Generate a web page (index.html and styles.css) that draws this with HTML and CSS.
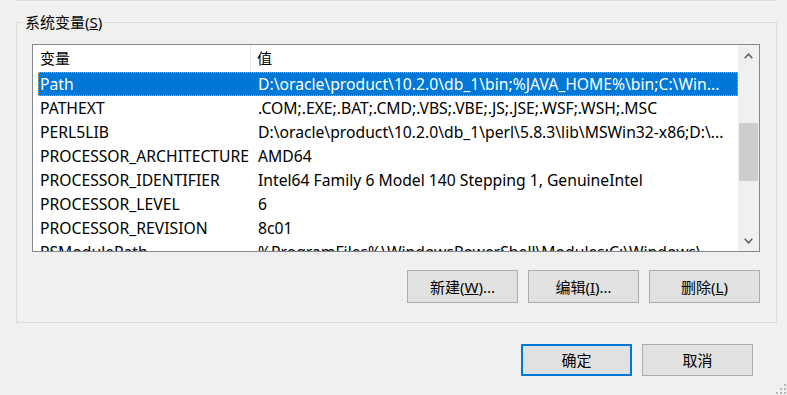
FILE: index.html
```html
<!DOCTYPE html>
<html>
<head>
  <meta charset="utf-8">
  <link rel="stylesheet" href="styles.css">
</head>
<body>
  <div class="prev-group"></div>

  <fieldset class="group">
    <legend class="group-title">系统变量(<u>S</u>)</legend>

    <div class="listview">
      <div class="list-body">
        <div class="list-header">
          <div class="col-name">变量</div>
          <div class="col-value">值</div>
        </div>
        <div class="row selected">
          <div class="col-name">Path</div>
          <div class="col-value">D:\oracle\product\10.2.0\db_1\bin;%JAVA_HOME%\bin;C:\Win...</div>
        </div>
        <div class="row">
          <div class="col-name">PATHEXT</div>
          <div class="col-value">.COM;.EXE;.BAT;.CMD;.VBS;.VBE;.JS;.JSE;.WSF;.WSH;.MSC</div>
        </div>
        <div class="row">
          <div class="col-name">PERL5LIB</div>
          <div class="col-value">D:\oracle\product\10.2.0\db_1\perl\5.8.3\lib\MSWin32-x86;D:\...</div>
        </div>
        <div class="row">
          <div class="col-name">PROCESSOR_ARCHITECTURE</div>
          <div class="col-value">AMD64</div>
        </div>
        <div class="row">
          <div class="col-name">PROCESSOR_IDENTIFIER</div>
          <div class="col-value">Intel64 Family 6 Model 140 Stepping 1, GenuineIntel</div>
        </div>
        <div class="row">
          <div class="col-name">PROCESSOR_LEVEL</div>
          <div class="col-value">6</div>
        </div>
        <div class="row">
          <div class="col-name">PROCESSOR_REVISION</div>
          <div class="col-value">8c01</div>
        </div>
        <div class="row">
          <div class="col-name">PSModulePath</div>
          <div class="col-value">%ProgramFiles%\WindowsPowerShell\Modules;C:\Windows\...</div>
        </div>
      </div>

      <div class="scrollbar">
        <div class="scroll-btn">
          <svg width="9" height="6" viewBox="0 0 9 6"><polyline points="0.7,5.2 4.5,1.2 8.3,5.2" fill="none" stroke="#606060" stroke-width="1.6"/></svg>
        </div>
        <div class="scroll-track">
          <div class="scroll-thumb"></div>
        </div>
        <div class="scroll-btn">
          <svg width="9" height="6" viewBox="0 0 9 6"><polyline points="0.7,0.8 4.5,4.8 8.3,0.8" fill="none" stroke="#606060" stroke-width="1.6"/></svg>
        </div>
      </div>
    </div>

    <div class="group-buttons">
      <button class="btn">新建(<u>W</u>)...</button>
      <button class="btn">编辑(<u>I</u>)...</button>
      <button class="btn">删除(<u>L</u>)</button>
    </div>
  </fieldset>

  <div class="dialog-buttons">
    <button class="btn default">确定</button>
    <button class="btn">取消</button>
  </div>

  <svg class="grip" width="11" height="11" viewBox="0 0 11 11">
    <rect x="8" y="0" width="2" height="2" fill="#b8b8b8"/>
    <rect x="4" y="4" width="2" height="2" fill="#b8b8b8"/>
    <rect x="8" y="4" width="2" height="2" fill="#b8b8b8"/>
    <rect x="0" y="8" width="2" height="2" fill="#b8b8b8"/>
    <rect x="4" y="8" width="2" height="2" fill="#b8b8b8"/>
    <rect x="8" y="8" width="2" height="2" fill="#b8b8b8"/>
  </svg>
</body>
</html>
```

FILE: styles.css
```css
html, body {
  height: 100%;
}

body {
  position: relative;
  margin: 0;
  padding: 0 10px 0 16px;
  background: #f0f0f0;
  font-family: "Noto Sans", "Noto Sans CJK SC", sans-serif;
  font-size: 15px;
  color: #000;
  overflow: hidden;
}

.prev-group {
  height: 0;
  border: 1px solid #dcdcdc;
  border-top: none;
}

.group {
  margin: 11px 0 0;
  padding: 0 16px 19px 15px;
  border: 1px solid #dcdcdc;
  min-inline-size: 0;
}

.group-title {
  margin-left: -9px;
  padding: 0 2px;
  line-height: 20px;
}

.listview {
  display: flex;
  height: 206px;
  margin-top: 12px;
  border: 1px solid #828790;
  background: #fff;
}

.list-body {
  flex: 1;
  overflow: hidden;
  font-size: 15.7px;
}

.list-header {
  display: flex;
  height: 27px;
  line-height: 27px;
  font-size: 15px;
}

.list-header .col-name {
  width: 210px;
  padding-left: 7px;
  border-right: 1px solid #e5e5e5;
}

.list-header .col-value {
  padding-left: 6px;
}

.row {
  box-sizing: border-box;
  display: flex;
  height: 24px;
  margin-left: 5px;
  padding-left: 1px;
  line-height: 22px;
  border: 1px solid transparent;
  white-space: nowrap;
}

.row .col-name {
  width: 211px;
  flex-shrink: 0;
  overflow: hidden;
}

.row .col-value {
  padding-left: 7px;
  overflow: hidden;
}

.row.selected {
  background: #0078d7;
  color: #fff;
  border: 1px dotted #f0a040;
}

.scrollbar {
  display: flex;
  flex-direction: column;
  width: 21px;
  background: #f0f0f0;
}

.scroll-btn {
  display: flex;
  align-items: center;
  justify-content: center;
  height: 21px;
}

.scroll-track {
  flex: 1;
}

.scroll-thumb {
  height: 58px;
  margin: 57px 1px 0 1px;
  background: #cdcdcd;
}

.group-buttons {
  display: flex;
  justify-content: flex-end;
  gap: 10px;
  margin-top: 18px;
}

.btn {
  width: 111px;
  height: 33px;
  padding: 0;
  background: #e1e1e1;
  border: 1px solid #adadad;
  font-family: "Noto Sans", "Noto Sans CJK SC", sans-serif;
  font-size: 15px;
  line-height: 20px;
  color: #000;
}

.dialog-buttons {
  display: flex;
  justify-content: flex-end;
  gap: 10px;
  margin: 21px 24px 0 0;
}

.dialog-buttons .btn {
  height: 32px;
}

.btn.default {
  border: 2px solid #0078d7;
}

.grip {
  position: absolute;
  right: 0;
  bottom: 0;
}
```
